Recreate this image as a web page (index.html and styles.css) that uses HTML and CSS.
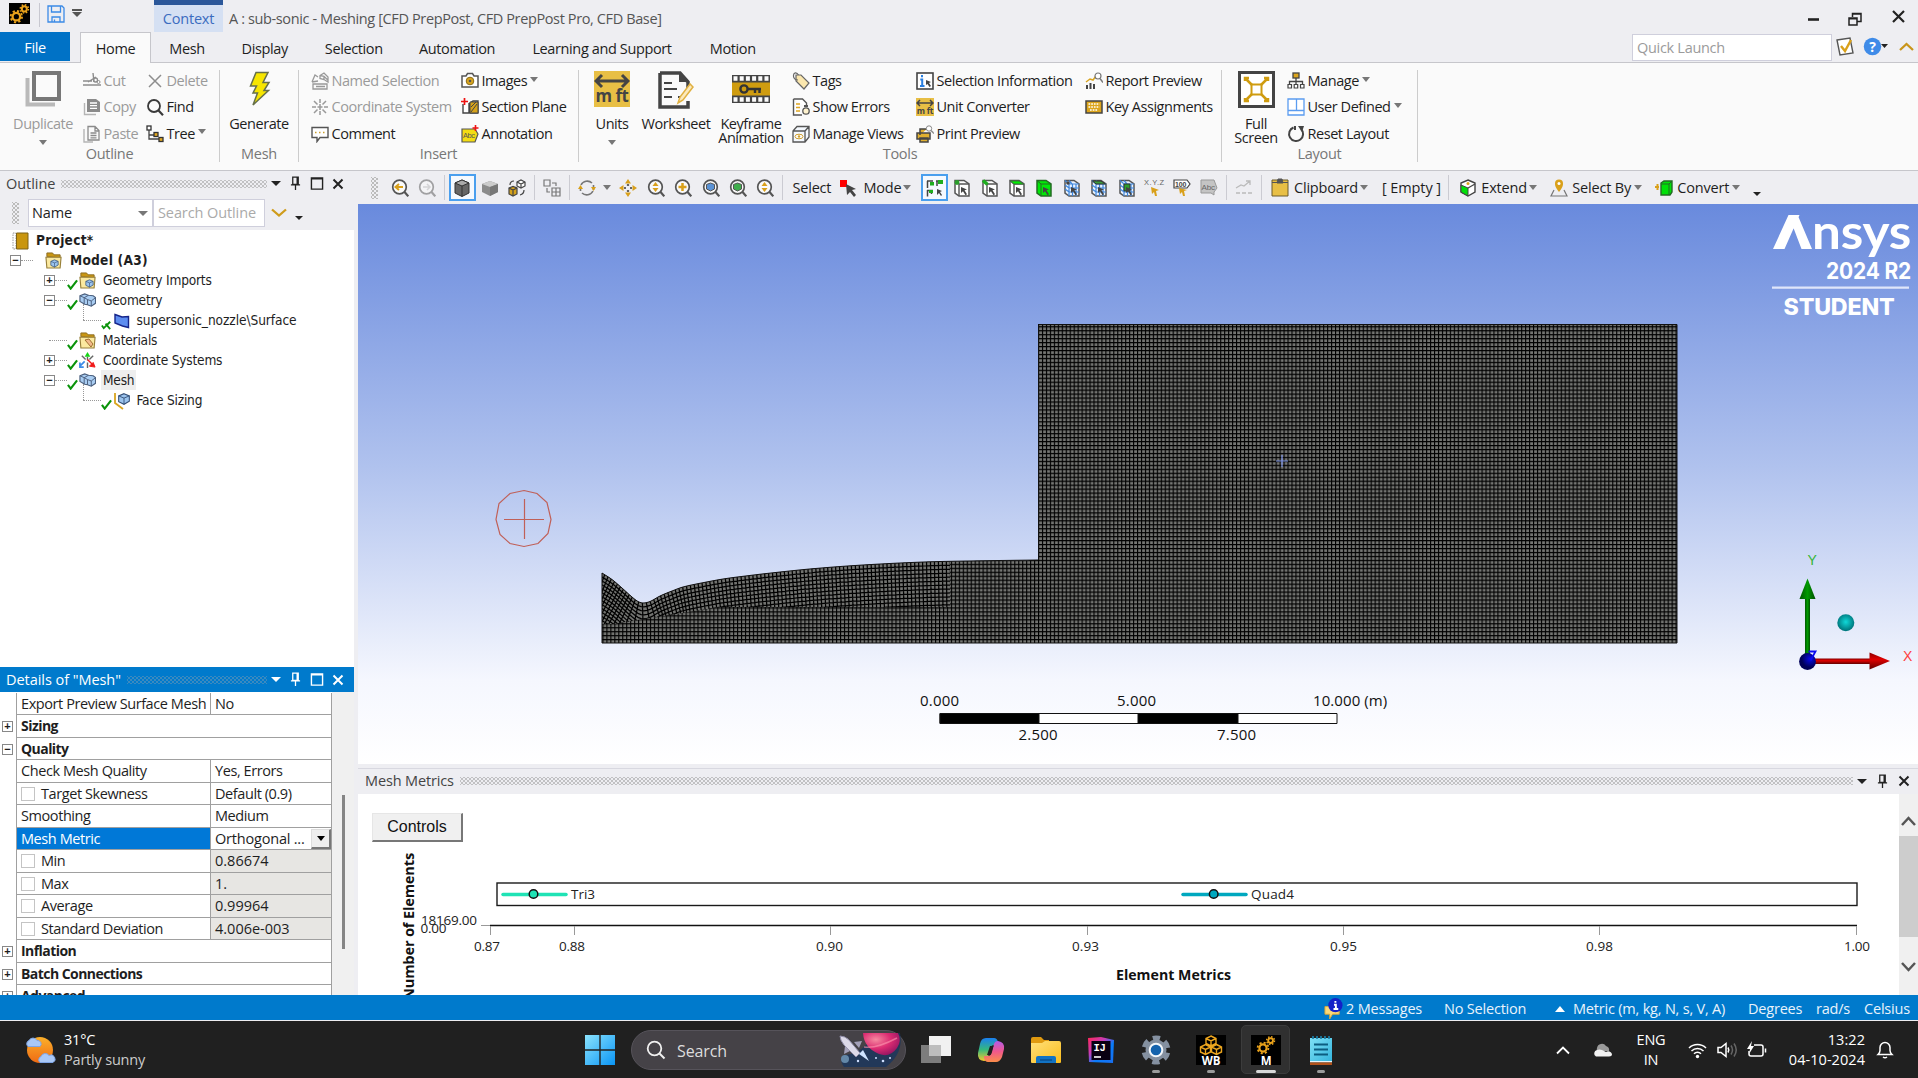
FILE: index.html
```html
<!DOCTYPE html>
<html lang="en">
<head>
<meta charset="utf-8">
<title>A : sub-sonic - Meshing</title>
<link rel="stylesheet" href="styles.css">
</head>
<body>
<svg class="defs" aria-hidden="true">
  <defs>
    <linearGradient id="gWin" x1="0" y1="0" x2="1" y2="1"><stop offset="0" stop-color="#8be3fd"/><stop offset="1" stop-color="#0a95f5"/></linearGradient>
    <linearGradient id="gSun" x1="0" y1="0" x2="0" y2="1"><stop offset="0" stop-color="#fbb02a"/><stop offset="1" stop-color="#ef6a13"/></linearGradient>
    <linearGradient id="gPad" x1="0" y1="0" x2="1" y2="1"><stop offset="0" stop-color="#7fe0f5"/><stop offset="1" stop-color="#33b4dd"/></linearGradient>
    <linearGradient id="gFold" x1="0" y1="0" x2="1" y2="1"><stop offset="0" stop-color="#ffe07a"/><stop offset="1" stop-color="#fbbd1d"/></linearGradient>
    <linearGradient id="gCopA" x1="0" y1="0" x2="0" y2="1"><stop offset="0" stop-color="#1a7ff0"/><stop offset=".5" stop-color="#35b87e"/><stop offset="1" stop-color="#f6c92c"/></linearGradient>
    <linearGradient id="gCopB" x1="0" y1="0" x2="0" y2="1"><stop offset="0" stop-color="#b25be8"/><stop offset=".5" stop-color="#f0588c"/><stop offset="1" stop-color="#fb8d4a"/></linearGradient>
    <linearGradient id="gIj" x1="0" y1="0" x2="1" y2="1"><stop offset="0" stop-color="#fe2857"/><stop offset=".35" stop-color="#c93bb5"/><stop offset=".6" stop-color="#087cfa"/><stop offset="1" stop-color="#1a6ff0"/></linearGradient>
    <radialGradient id="gPlanet" cx=".35" cy=".3" r=".8"><stop offset="0" stop-color="#f58aa0"/><stop offset=".5" stop-color="#dc2c72"/><stop offset="1" stop-color="#8a1260"/></radialGradient>
    <symbol id="gears" viewBox="0 0 20 20"><rect width="20" height="20" fill="#000"/><g fill="none" stroke="#e9a21b"><circle cx="7" cy="13" r="3.6" stroke-width="2.2"/><circle cx="7" cy="13" r="5.4" stroke-width="1.8" stroke-dasharray="2.1 2.14"/><circle cx="14.6" cy="5.6" r="2.4" stroke-width="1.9"/><circle cx="14.6" cy="5.6" r="3.9" stroke-width="1.5" stroke-dasharray="1.5 1.56"/></g></symbol>
    <symbol id="save" viewBox="0 0 18 18"><path d="M1 1h14l2 2v14H1zM4.5 1v6h9V1M5 17v-5h8v5M7.5 14.5v2.500" fill="none" stroke="#3b8ae6" stroke-width="1.300"/></symbol>
    <symbol id="dup" viewBox="0 0 36 36"><path d="M2.500 7v26.500H30" fill="none" stroke="#b9b9b9" stroke-width="4"/><rect x="9" y="2" width="25" height="26" fill="#fafafa" stroke="#777" stroke-width="4"/></symbol>
    <symbol id="cut" viewBox="0 0 18 18"><path d="M0 9h9M10 1l1 9M5 10l8-5M0 13h18" fill="none" stroke="#8d8d8d" stroke-width="1.400"/><circle cx="12.500" cy="8" r="2" fill="none" stroke="#8d8d8d" stroke-width="1.300"/><circle cx="15.500" cy="10" r="1.500" fill="none" stroke="#8d8d8d"/></symbol>
    <symbol id="copy" viewBox="0 0 18 18"><path d="M1.500 5v11.500H13" fill="none" stroke="#b5b5b5" stroke-width="1.400"/><path d="M4 1h9l4 3v10H4z" fill="#8b8b8b"/><path d="M7 5h7M7 7.700h7M7 10.400h7" stroke="#fff" stroke-width="1.300"/></symbol>
    <symbol id="paste" viewBox="0 0 18 18"><path d="M1 4v13h9" fill="none" stroke="#b5b5b5" stroke-width="1.400"/><path d="M5 1.500h7l4 4V15H5zM12 1.500V6h4M7.500 8h6M7.500 10.500h6M7.500 12.800h6" fill="none" stroke="#8b8b8b" stroke-width="1.300"/></symbol>
    <symbol id="del" viewBox="0 0 18 18"><path d="M3 3l12 12M15 3L3 15" stroke="#8d8d8d" stroke-width="1.500"/></symbol>
    <symbol id="find" viewBox="0 0 18 18"><circle cx="8" cy="8" r="6" fill="none" stroke="#3a3a3a" stroke-width="1.800"/><path d="M12.300 12.300l4.700 4.900" stroke="#3a3a3a" stroke-width="2.200"/></symbol>
    <symbol id="tree" viewBox="0 0 18 18"><path d="M3 5v9h10M3 10h6" fill="none" stroke="#444" stroke-width="1.300"/><rect x="1" y="1" width="4" height="4" fill="#fff" stroke="#333" stroke-width="1.300"/><rect x="8" y="7.500" width="4" height="4" fill="#e0a620" stroke="#333" stroke-width="1.300"/><rect x="13" y="12.500" width="4" height="4" fill="#e0a620" stroke="#333" stroke-width="1.300"/></symbol>
    <symbol id="bolt" viewBox="0 0 24 36"><path d="M9 1.500h12l-5 10h6l-5 8h4.500L6 34l4.500-12H6l3.500-7H3.500z" fill="#f7e600" stroke="#66704a" stroke-width="1.500"/></symbol>
    <symbol id="named" viewBox="0 0 18 18"><path d="M2 12h14v5H2zM5 14.500h9M9 3.500L13 1l4 4v5l-4-2.500-4-1zM9 3.500l4 .8 4 4M13 4.300V8M1 10L4 3l3 2M1 10l6-1" fill="none" stroke="#999" stroke-width="1.300"/></symbol>
    <symbol id="coord" viewBox="0 0 18 18"><path d="M9 1v4M9 17v-4M3 3l3.500 3.500M15 3l-3.500 3.500M3 15l3.500-3.500M15 15l-3.500-3.500M1 9h4M17 9h-4M9 6v6M6.500 9h5" stroke="#999" stroke-width="1.500"/></symbol>
    <symbol id="comment" viewBox="0 0 18 18"><path d="M1 2.500h16v10H9l-3 4v-4H1z" fill="#fff" stroke="#555" stroke-width="1.400"/><path d="M4 7.500h1.500M8 7.500h1.500M12 7.500h1.500" stroke="#caa030" stroke-width="1.500"/></symbol>
    <symbol id="camera" viewBox="0 0 18 18"><path d="M1 4h4l1.500-2.500h5L13 4h4v11H1z" fill="#fff" stroke="#555" stroke-width="1.500"/><circle cx="9" cy="9" r="3.800" fill="#d9a51d" stroke="#8a6a15"/><circle cx="9" cy="9" r="1.300" fill="#555"/></symbol>
    <symbol id="section" viewBox="0 0 18 18"><path d="M2 6v9h6V5M9 15V5l3-2h5v12z" fill="#fff" stroke="#444" stroke-width="1.400"/><path d="M9 4h8v11H9z" fill="#d6a21a" stroke="#444"/><path d="M10 14l6-8M10 9l5-5" stroke="#444"/><path d="M3.500 0v7M0 3.500h7" stroke="#e11" stroke-width="1.700"/></symbol>
    <symbol id="annot" viewBox="0 0 18 18"><path d="M1 4h13l3 5-3 8H1z" fill="#f3dc12" stroke="#555" stroke-width="1.200"/><text x="2" y="12.500" font-family="Liberation Sans" font-size="7.500" fill="#555">Abc</text><path d="M14.500 0v6M11.500 3h6" stroke="#e11" stroke-width="1.600"/></symbol>
    <symbol id="units" viewBox="0 0 36 36"><rect width="36" height="36" fill="#e8bf45"/><path d="M2 10h32M8 4L2 10l6 6M28 4l6 6-6 6" fill="none" stroke="#444" stroke-width="3"/><text x="1.500" y="31" font-family="Open Sans,sans-serif" font-weight="700" font-size="17" textLength="33" lengthAdjust="spacingAndGlyphs" fill="#444">m ft</text></symbol>
    <symbol id="sheet" viewBox="0 0 36 38"><path d="M2 2h20l8 9v8M30 30v6H2V2" fill="none" stroke="#444" stroke-width="3.500"/><path d="M21 2v9h9z" fill="#444"/><path d="M6 12h8M6 18h13M6 26h8M20 26h4" stroke="#444" stroke-width="2.200"/><path d="M20 32l2-6 10-13 3 3-10 13z" fill="#fbe9bd" stroke="#e0b040" stroke-width="1.500"/></symbol>
    <symbol id="film" viewBox="0 0 38 28"><path d="M0 0h38v28H0z" fill="#444"/><path d="M1.500 3.500h35M1.500 24.500h35" stroke="#fafafa" stroke-width="4.500" stroke-dasharray="4 2.200"/><path d="M0 7.500h38v13H0z" fill="#cf9c10"/><circle cx="12" cy="14" r="3.600" fill="none" stroke="#333" stroke-width="2.400"/><path d="M15 14h14M23 14v4M27.500 14v4" stroke="#333" stroke-width="2.400"/></symbol>
    <symbol id="tag" viewBox="0 0 18 18"><path d="M4 3h5l8 8-5 6-8-8z" fill="#fbe7ae" stroke="#666" stroke-width="1.200"/><path d="M6 8C3 8 1 6 1.500 3S5 .5 6.500 3" fill="none" stroke="#666" stroke-width="1.200"/></symbol>
    <symbol id="errors" viewBox="0 0 18 18"><path d="M1.500 1h9l4 4v4M10 17H1.500V1" fill="#fff" stroke="#555" stroke-width="1.400"/><path d="M4 6h4M4 9.500h4M4 13h4" stroke="#e0a620" stroke-width="1.500"/><path d="M12 7h4v2h-4z" fill="#555"/><circle cx="14" cy="13" r="3.200" fill="#fff3cf" stroke="#555" stroke-width="1.300"/></symbol>
    <symbol id="views" viewBox="0 0 18 18"><path d="M1 6l4-4.500h12V12l-4 5H1zM1 6h12v11M13 6l4-4.500" fill="#f4f8fd" stroke="#555" stroke-width="1.300"/><ellipse cx="7" cy="11.500" rx="4" ry="2.300" fill="#fff" stroke="#d0a030"/><circle cx="7" cy="11.500" r="1.200" fill="#d0a030"/></symbol>
    <symbol id="selinfo" viewBox="0 0 18 18"><rect x="1" y="1" width="16" height="16" fill="#fff" stroke="#444" stroke-width="1.600"/><path d="M6 3v2.200M4.300 7.500H6.200V14M4 14h4.500" stroke="#2a7fe0" stroke-width="2" fill="none"/><path d="M10 8l5 2-2 1 2 3-1.500 1-2-3L10 13z" fill="#444"/></symbol>
    <symbol id="print" viewBox="0 0 18 18"><path d="M4 10V4h7M1 8h13v6H1zM4 13h8v4H4z" fill="#e0b030" stroke="#444" stroke-width="1.500"/><circle cx="13" cy="3.500" r="2.700" fill="#fff" stroke="#888"/><path d="M15 5.500l3 3" stroke="#888" stroke-width="1.400"/></symbol>
    <symbol id="report" viewBox="0 0 18 18"><path d="M1 10l4-3 3 1 3-4" fill="none" stroke="#d9a520" stroke-width="1.500"/><path d="M2 17v-4M5.500 17v-6M9 17v-5" stroke="#444" stroke-width="2"/><circle cx="13" cy="4" r="3" fill="#fff" stroke="#777" stroke-width="1.200"/><path d="M15 6.500l3 4" stroke="#777" stroke-width="1.400"/></symbol>
    <symbol id="keyb" viewBox="0 0 18 18"><rect x="1" y="3" width="16" height="12" fill="#dca51c" stroke="#444" stroke-width="1.500"/><path d="M3.500 6h11M3.500 9h11M5 12h8" stroke="#fff" stroke-width="1.700" stroke-dasharray="1.700 1"/></symbol>
    <symbol id="full" viewBox="0 0 37 37"><rect x="1.500" y="1.500" width="34" height="34" fill="#fff" stroke="#444" stroke-width="3"/><rect x="13.500" y="13.500" width="10" height="10" fill="none" stroke="#cf9c10" stroke-width="2"/><path d="M7 7l7 7M30 7l-7 7M7 30l7-7M30 30l-7-7M7 10V7h4M26 7h4v3M7 27v3h4M26 30h4v-3" fill="none" stroke="#cf9c10" stroke-width="2.500"/></symbol>
    <symbol id="manage" viewBox="0 0 18 18"><rect x="6" y="1" width="6" height="5" fill="#dca51c" stroke="#444" stroke-width="1.300"/><path d="M9 6v6M2.500 12V9.500h13V12" fill="none" stroke="#444" stroke-width="1.300"/><path d="M1 12.500h3.500v3.500H1zM7.200 12.500h3.500v3.500H7.200zM13.500 12.500h3.500v3.500h-3.500z" fill="#fff" stroke="#444" stroke-width="1.200"/></symbol>
    <symbol id="userdef" viewBox="0 0 18 18"><path d="M1 1h16v16H1zM1 12.500h16M9.500 1v11.500" fill="#fff" stroke="#5b9cf0" stroke-width="1.300"/></symbol>
    <symbol id="reset" viewBox="0 0 18 18"><path d="M6.500 2.500a7 7 0 1 0 7.500 1.500M8 1v4" fill="none" stroke="#444" stroke-width="2"/><path d="M11 1h6l-2 6z" fill="#444"/></symbol>
    <symbol id="mag" viewBox="0 0 18 18"><circle cx="8.500" cy="8" r="6.800" fill="#fafafa" stroke="#555" stroke-width="1.700"/><path d="M13.300 12.800l4 4.500" stroke="#555" stroke-width="2.200"/></symbol>
    <symbol id="box" viewBox="0 0 18 18"><path d="M2 1.500h9L16 5v12H6L2 14z" fill="#fff" stroke="#555" stroke-width="1.500"/><path d="M2 1.500L6 5h10M6 5v12" fill="none" stroke="#555" stroke-width="1.400"/></symbol>
    <symbol id="ptr" viewBox="0 0 18 18"><path d="M8 8l6 2.500-2.500.8 2.500 4-1.500 1-2.500-4L8 14z" fill="#444"/></symbol>
    <symbol id="grid" viewBox="0 0 18 18"><path d="M2 1.500h9L16 5v12H6L2 14z" fill="#e8f1fd" stroke="#555" stroke-width="1.500"/><path d="M6 5v12M2 1.500L6 5h10M9.500 5v12M13 5v12M2 6l4 3h10M2 10l4 3h10M6 1.500l3 3.500" fill="none" stroke="#3d86dd" stroke-width="1.200"/></symbol>
    <symbol id="pin" viewBox="0 0 12 16"><path d="M3 1h6v8H3zM1 9.500h10M6 9.500V15M7.800 1v8" fill="none" stroke="currentColor" stroke-width="1.400"/></symbol>
    <symbol id="max" viewBox="0 0 14 14"><path d="M1 1h12v12H1zM1 2h12" fill="none" stroke="currentColor" stroke-width="1.500"/></symbol>
    <symbol id="close" viewBox="0 0 12 12"><path d="M1.500 1.500l9 9M10.500 1.500l-9 9" stroke="currentColor" stroke-width="2"/></symbol>
    <symbol id="check" viewBox="0 0 12 12"><path d="M1 6.500l3 4L11 1.500" fill="none" stroke="#0a930a" stroke-width="2.300"/></symbol>
    <symbol id="folder" viewBox="0 0 18 18"><path d="M2 5V1h6l1.500 2H16v3z" fill="#c99613" stroke="#8a6a20"/><path d="M1 5.500h16L16 17H2z" fill="#fbe9a0" stroke="#98803a" stroke-width="1.200"/></symbol>
    <symbol id="cube" viewBox="0 0 18 18"><path d="M9 3l6 2.500v6L9 15 3 12V5.500z" fill="#9cc4ee" stroke="#334f77" stroke-width="1.200"/><path d="M3 5.500L9 8l6-2.500M9 8v7" fill="none" stroke="#334f77"/></symbol>
    <symbol id="cubes" viewBox="0 0 18 18"><path d="M1 4l5-2 4 1.500L15 4l2.500 2v6L13 15l-4-1.500L6 13l-5-3z" fill="#a9cdf2" stroke="#4a5f7d" stroke-width="1.200"/><path d="M1 4l4.500 2L10 3.500M5.500 6v6.500M9 8l4 1.500L17.500 6M9 8v5.500M13 9.500V15M9 8l-3.500-2" fill="none" stroke="#4a5f7d"/></symbol>
    <symbol id="info" viewBox="0 0 20 24"><path d="M1 10h15v8H9l-3 5v-5H1z" fill="#fbd978" stroke="#d8a838"/><circle cx="12" cy="8.500" r="7.500" fill="#1421c8"/><path d="M12 4v2M10.500 8H12.500v4.500M10 12.500h5" stroke="#fff" stroke-width="2" fill="none"/></symbol>
  </defs>
</svg>

<header class="titlebar">
  <svg class="app-ic"><use href="#gears"/></svg><i class="tsep"></i>
  <svg class="save-ic"><use href="#save"/></svg><span class="qat"></span>
  <div class="context">Context</div>
  <div class="wintitle">A : sub-sonic - Meshing [CFD PrepPost, CFD PrepPost Pro, CFD Base]</div>
  <svg class="winbtns" viewBox="0 0 100 20"><path d="M2 10.500h11" stroke="#222" stroke-width="2.600"/><path d="M43 9h8v7h-8zM46.500 8V4.500h8.500v8h-3.500M46 5h9M43 9.700h8" fill="none" stroke="#222" stroke-width="1.500"/><path d="M87 2l11 11M98 2L87 13" stroke="#222" stroke-width="2.200"/></svg>
</header>

<nav class="tabs">
  <div class="tab file">File</div>
  <div class="tab home">Home</div><div class="tab w1">Mesh</div><div class="tab w2">Display</div><div class="tab w3">Selection</div><div class="tab w4">Automation</div><div class="tab w5">Learning and Support</div><div class="tab w2">Motion</div>
  <div class="quick">Quick Launch</div>
  <svg class="quick-ic" viewBox="0 0 80 20"><path d="M1 3l13-2 3 15-13 2z" fill="#fff" stroke="#555" stroke-width="1.400"/><path d="M5 9l4 5 6-11" fill="none" stroke="#d9a01a" stroke-width="2.400"/><circle cx="36.500" cy="9.500" r="8.700" fill="#3f8be8"/><text x="36.500" y="15" text-anchor="middle" font-family="Open Sans,sans-serif" font-weight="700" font-size="14" fill="#fff">?</text><path d="M45 7h7l-3.500 4z" fill="#222"/><path d="M64 13l6.500-6 6.500 6" fill="none" stroke="#c9951a" stroke-width="2.300"/></svg>
</nav>

<section class="ribbon">
  <div class="group g-outline">
    <div class="items">
      <div class="big off"><svg width="36" height="36"><use href="#dup"/></svg><b>Duplicate</b><i class="dd"></i></div>
      <div class="col"><div class="it off"><svg><use href="#cut"/></svg>Cut</div><div class="it off"><svg><use href="#copy"/></svg>Copy</div><div class="it off"><svg><use href="#paste"/></svg>Paste</div></div>
      <div class="col"><div class="it off"><svg><use href="#del"/></svg>Delete</div><div class="it"><svg><use href="#find"/></svg>Find</div><div class="it"><svg><use href="#tree"/></svg>Tree<i class="dd"></i></div></div>
    </div><div class="glabel">Outline</div>
  </div>
  <div class="group g-mesh">
    <div class="items"><div class="big"><svg width="24" height="36"><use href="#bolt"/></svg><b>Generate</b></div></div><div class="glabel">Mesh</div>
  </div>
  <div class="group g-insert">
    <div class="items">
      <div class="col"><div class="it off"><svg><use href="#named"/></svg>Named Selection</div><div class="it off"><svg><use href="#coord"/></svg>Coordinate System</div><div class="it"><svg><use href="#comment"/></svg>Comment</div></div>
      <div class="col"><div class="it"><svg><use href="#camera"/></svg>Images<i class="dd"></i></div><div class="it"><svg><use href="#section"/></svg>Section Plane</div><div class="it"><svg><use href="#annot"/></svg>Annotation</div></div>
    </div><div class="glabel">Insert</div>
  </div>
  <div class="group g-tools">
    <div class="items">
      <div class="big"><svg width="36" height="36"><use href="#units"/></svg><b>Units</b><i class="dd"></i></div>
      <div class="big"><svg width="36" height="38"><use href="#sheet"/></svg><b>Worksheet</b></div>
      <div class="big"><svg width="38" height="36"><use href="#film"/></svg><b>Keyframe<br>Animation</b></div>
      <div class="col"><div class="it"><svg><use href="#tag"/></svg>Tags</div><div class="it"><svg><use href="#errors"/></svg>Show Errors</div><div class="it"><svg><use href="#views"/></svg>Manage Views</div></div>
      <div class="col"><div class="it"><svg><use href="#selinfo"/></svg>Selection Information</div><div class="it"><svg><use href="#units"/></svg>Unit Converter</div><div class="it"><svg><use href="#print"/></svg>Print Preview</div></div>
      <div class="col"><div class="it"><svg><use href="#report"/></svg>Report Preview</div><div class="it"><svg><use href="#keyb"/></svg>Key Assignments</div></div>
    </div><div class="glabel">Tools</div>
  </div>
  <div class="group g-layout">
    <div class="items">
      <div class="big"><svg width="37" height="37"><use href="#full"/></svg><b>Full<br>Screen</b></div>
      <div class="col"><div class="it"><svg><use href="#manage"/></svg>Manage<i class="dd"></i></div><div class="it"><svg><use href="#userdef"/></svg>User Defined<i class="dd"></i></div><div class="it"><svg><use href="#reset"/></svg>Reset Layout</div></div>
    </div><div class="glabel">Layout</div>
  </div>
</section>

<main class="work">
  <aside class="left">
    <div class="phead"><span>Outline</span><i class="dots"></i><i class="tri"></i><svg class="p1"><use href="#pin"/></svg><svg class="p2"><use href="#max"/></svg><svg class="p3"><use href="#close"/></svg></div>
    <div class="filter"><i class="grip"></i><div class="combo">Name<i class="dd"></i></div><div class="srch">Search Outline</div><svg class="chev" viewBox="0 0 16 10"><path d="M1 1.500l7 6 7-6" fill="none" stroke="#cf9c1c" stroke-width="2.300"/></svg><i class="tri sm"></i></div>
    <div class="treebox">
      <div class="row l0"><svg class="ti"><path d="M1 1h3v16H1z" fill="#fff" stroke="#999" stroke-dasharray="1.500 1"/><path d="M4.500 1H16v16H4.500z" fill="#c9960f" stroke="#7d6218"/></svg><b>Project*</b></div>
      <div class="row l1"><i class="ex">−</i><i class="dash"></i><svg class="ti"><use href="#folder"/><use href="#cube" x="4" y="6" width="11" height="11"/></svg><b>Model (A3)</b></div>
      <div class="row l2"><i class="ex">+</i><i class="dash"></i><svg class="ck"><use href="#check"/></svg><svg class="ti"><use href="#folder"/><use href="#cube" x="5" y="6" width="11" height="11"/></svg><span>Geometry Imports</span></div>
      <div class="row l2"><i class="ex">−</i><i class="dash"></i><svg class="ck"><use href="#check"/></svg><svg class="ti"><use href="#cubes"/></svg><span>Geometry</span></div>
      <div class="row l3"><i class="dash"></i><svg class="ck" viewBox="0 0 12 12"><path d="M1 7l2 3 7-7M5 5l5 6" fill="none" stroke="#0a930a" stroke-width="2"/></svg><svg class="ti"><path d="M2 2.500l7 2.500 6.500-.5v11l-6-1.500-7.500-3z" fill="#5d8df0" stroke="#15248a" stroke-width="1.400"/></svg><span class="wide">supersonic_nozzle\Surface</span></div>
      <div class="row l2 noex"><i class="dash"></i><svg class="ck"><use href="#check"/></svg><svg class="ti"><use href="#folder"/><path d="M6 8l4-1 4 5-2 3z" fill="#f2b98c" stroke="#a07030"/></svg><span>Materials</span></div>
      <div class="row l2"><i class="ex">+</i><i class="dash"></i><svg class="ck"><use href="#check"/></svg><svg class="ti" viewBox="0 0 18 18"><path d="M9 9V5M3 4l4 4M15 4l-4 4M9 11v6" stroke="#666" stroke-width="1.500"/><path d="M9 0L6 5h6z" fill="#16d416"/><path d="M17 16l-6-1 4-4z" fill="#f01818" stroke="#f01818"/><path d="M1 15l5-5M1 11v5h4" stroke="#3b8be8" stroke-width="1.800" fill="none"/><path d="M9 8l5 5" stroke="#f01818" stroke-width="1.500"/></svg><span>Coordinate Systems</span></div>
      <div class="row l2"><i class="ex">−</i><i class="dash"></i><svg class="ck"><use href="#check"/></svg><svg class="ti"><use href="#cubes"/></svg><span class="hl">Mesh</span></div>
      <div class="row l3"><i class="dash"></i><svg class="ck"><use href="#check"/></svg><svg class="ti"><path d="M2 1v10l8 6" fill="none" stroke="#d9a520" stroke-width="1.800"/><use href="#cube" x="3" y="-1" width="16" height="16"/></svg><span>Face Sizing</span></div>
    </div>
    <div class="phead blue"><span>Details of "Mesh"</span><i class="dots"></i><i class="tri"></i><svg class="p1"><use href="#pin"/></svg><svg class="p2"><use href="#max"/></svg><svg class="p3"><use href="#close"/></svg></div>
    <div class="details">
      <div class="table">
        <div class="dr"><i></i><span>Export Preview Surface Mesh</span><em>No</em></div>
        <div class="dr hd"><i><s>+</s></i><b>Sizing</b></div>
        <div class="dr hd"><i><s>−</s></i><b>Quality</b></div>
        <div class="dr"><i></i><span>Check Mesh Quality</span><em>Yes, Errors</em></div>
        <div class="dr"><i></i><span><u></u>Target Skewness</span><em>Default (0.9)</em></div>
        <div class="dr"><i></i><span>Smoothing</span><em>Medium</em></div>
        <div class="dr sel"><i></i><span>Mesh Metric</span><em>Orthogonal ...<q></q></em></div>
        <div class="dr ro"><i></i><span><u></u>Min</span><em>0.86674</em></div>
        <div class="dr ro"><i></i><span><u></u>Max</span><em>1.</em></div>
        <div class="dr ro"><i></i><span><u></u>Average</span><em>0.99964</em></div>
        <div class="dr ro"><i></i><span><u></u>Standard Deviation</span><em>4.006e-003</em></div>
        <div class="dr hd"><i><s>+</s></i><b>Inflation</b></div>
        <div class="dr hd"><i><s>+</s></i><b>Batch Connections</b></div>
        <div class="dr hd"><i><s>+</s></i><b>Advanced</b></div>
      </div>
      <div class="dscroll"></div>
    </div>
  </aside>

  <section class="right">
    <div class="toolbar">
      <i class="grip"></i>
      <span class="c"><svg><use href="#mag"/><path d="M4 8h8M8 5L4.500 8 8 11" stroke="#d9a01a" stroke-width="2" fill="none"/></svg></span>
      <span class="c"><svg opacity=".5"><use href="#mag"/><path d="M5 8h7M9 5l3 3-3 3" stroke="#bbb" stroke-width="1.500" fill="none"/></svg></span>
      <i class="sep"></i>
      <span class="c on"><svg><path d="M9 1l7 3v10l-7 3.500L2 14V4z" fill="#666" stroke="#333"/><path d="M2 4l7 3 7-3-7-3z" fill="#aaa" stroke="#333"/><path d="M9 7v10.500" stroke="#333"/></svg></span>
      <span class="c"><svg><path d="M9 2l8 3v8l-8 4-8-4V5z" fill="#8b8b8b"/><path d="M1 5l8 3 8-3-8-3z" fill="#ccc"/><path d="M9 8l8-3v8l-8 4z" fill="#777"/></svg></span>
      <span class="c"><svg><path d="M9 3l4-2 4 2v4l-4 2-4-2z" fill="#fff" stroke="#444" stroke-width="1.200"/><path d="M1 9l4-1.500L9 9v6l-4 2-4-2z" fill="#d6a21a" stroke="#444" stroke-width="1.200"/><path d="M1 9l4 2 4-2M5 11v6M9 3l4 2 4-2M13 5v4M2 6q0-4 4-4M16 11q0 4-4 5" fill="none" stroke="#444" stroke-width="1.200"/></svg></span>
      <i class="sep"></i>
      <span class="c"><svg><path d="M1 1h6v6H1zM9 9h8v8H9zM13 9v8M9 13h8M9 4h4v3M4 9v4h3" fill="none" stroke="#777" stroke-width="1.200"/></svg></span>
      <i class="sep"></i>
      <span class="c"><svg><path d="M3 6a7 7 0 0 1 11-2M15 12a7 7 0 0 1-11 2M2.500 12V8M15.500 6v5" fill="none" stroke="#777" stroke-width="1.600"/><path d="M0 10h5l-2.500-4zM13 8h5l-2.500 4z" fill="#d9a01a"/></svg></span>
      <span class="c arrow"><i class="dd"></i></span>
      <span class="c"><svg><path d="M9 0l3 4.500H6zM9 18l3-4.500H6zM0 9l4.500-3v6zM18 9l-4.500-3v6z" fill="#d9a01a"/><path d="M9 5v2M9 11v2M5 9h2M11 9h2" stroke="#666" stroke-width="2.200"/></svg></span>
      <span class="c"><svg><use href="#mag"/><path d="M8.500 3l3 4h-6zM8.500 13l3-4h-6z" fill="#d9a01a"/></svg></span>
      <span class="c"><svg><use href="#mag"/><path d="M8.500 4v8M4.500 8h8" stroke="#d9a01a" stroke-width="2.500"/></svg></span>
      <span class="c"><svg><use href="#mag"/><path d="M8.500 4l4 1.500V10l-4 2-4-2V5.500z" fill="#5b93d6" stroke="#555"/></svg></span>
      <span class="c"><svg><use href="#mag"/><path d="M8.500 4l4 1.500V10l-4 2-4-2V5.500z" fill="#3fae4b" stroke="#555"/></svg></span>
      <span class="c"><svg><use href="#mag"/><path d="M8.500 3l3 4h-6zM8.500 13l3-4h-6z" fill="#d9a01a"/></svg></span>
      <i class="sep"></i>
      <span class="t t-sel">Select</span>
      <span class="t t-mode"><svg><path d="M0 1h7v7H0z" fill="#f00"/><path d="M6 5l10 5-4 1 4 5-2 2-4-5-3 3z" fill="#444"/></svg>Mode<i class="dd"></i></span>
      <span class="c on"><svg><path d="M1.500 9V2M1 2h6M10 2h7M11 2v5M1 11.500h6M1.500 11v6.500M5.500 11.500V15" stroke="#444" stroke-width="1.500" fill="none"/><path d="M4 3h4v3.500H4zM12 1h5v4h-5zM3 11h4v3H3z" fill="#1fae1f"/><path d="M11 10l5 2-2 1 2 3-1 1-2-3-2 2z" fill="#444"/></svg></span>
      <span class="c"><svg><use href="#box"/><circle cx="4" cy="3.500" r="2.400" fill="#2c9e2c"/><use href="#ptr"/></svg></span>
      <span class="c"><svg><use href="#box"/><path d="M2 1.500L6.500 5.500" stroke="#1fae1f" stroke-width="3.500"/><use href="#ptr"/></svg></span>
      <span class="c"><svg><use href="#box"/><path d="M2.500 2h8.500L15.500 5H6z" fill="#00f000" stroke="#357a35"/><use href="#ptr"/></svg></span>
      <span class="c"><svg><path d="M2 1.500h9L16 5v12H6L2 14z" fill="#00e808" stroke="#246b24" stroke-width="1.500"/><path d="M2 1.500L6 5h10M6 5v12" fill="none" stroke="#246b24"/><use href="#ptr"/></svg></span>
      <span class="c"><svg><use href="#grid"/><circle cx="5" cy="4" r="1.800" fill="#444"/><use href="#ptr"/></svg></span>
      <span class="c"><svg><use href="#grid"/><path d="M2.500 2h8.500L15.500 5H6z" fill="#3c9e3c" stroke="#333"/><use href="#ptr"/></svg></span>
      <span class="c"><svg><use href="#grid"/><path d="M6 5h6v7H6z" fill="#2c9e2c" stroke="#333"/><use href="#ptr"/></svg></span>
      <span class="c"><svg><text x="-1" y="6" font-family="Liberation Sans" font-size="7.500" textLength="20" fill="#666">X.Y.Z</text><path d="M6 8l8 3-3 1 1 5h-2l-1-4-2 2z" fill="#d9a01a"/></svg></span>
      <span class="c"><svg><path d="M1 1h13l3 4-3 4H1z" fill="#fff" stroke="#444" stroke-width="1.200"/><text x="2" y="7.500" font-family="Liberation Sans" font-size="7" font-weight="700" fill="#444">100</text><path d="M6 9l8 2-3 1 1 5h-2l-1-4-2 2z" fill="#d9a01a"/></svg></span>
      <span class="c"><svg><path d="M1 1h13l3 8-3 4v3l-3-2H1z" fill="#c4c4c4" stroke="#999"/><text x="1.500" y="11" font-family="Liberation Sans" font-size="8" fill="#666">Abc</text></svg></span>
      <i class="sep"></i>
      <span class="c"><svg><path d="M1 9l5-3 3 1 6-5M11 2h4v4M1 14h4M7 14h4M13 14h4" fill="none" stroke="#bbb" stroke-width="1.300"/></svg></span>
      <i class="sep"></i>
      <span class="t t-clip"><svg><path d="M1 1h16v16H1z" fill="#e8bf45" stroke="#6a5a2a"/><path d="M1 3.500h16M7 0h4l1 4H6z" fill="#555" stroke="#555"/></svg>Clipboard<i class="dd"></i></span>
      <span class="t t-empty">[ Empty ]</span>
      <i class="sep"></i>
      <span class="t t-ext"><svg><path d="M9 1l7 3v9l-7 4-7-4V4z" fill="#fff" stroke="#444" stroke-width="1.400"/><path d="M2 6l7 3v8l-7-4z" fill="#00e008" stroke="#444"/><path d="M9 9l7-4" stroke="#444" stroke-width="1.300"/><circle cx="9" cy="4.500" r="1.500" fill="#d9a01a"/></svg>Extend<i class="dd"></i></span>
      <span class="t t-by"><svg><path d="M9 13C5 8 5 6 5 4.500a4 4 0 0 1 8 0C13 6 13 8 9 13z" fill="#d9a01a"/><circle cx="9" cy="4.500" r="1.500" fill="#fff"/><path d="M4 11l-3 6h16l-3-6" fill="none" stroke="#777" stroke-width="1.200"/></svg>Select By<i class="dd"></i></span>
      <span class="t t-conv"><svg><path d="M6 4l3-2h8v11l-2 3H6z" fill="#00e008" stroke="#246b24" stroke-width="1.400"/><path d="M6 5h8v11M14 5l3-3" fill="none" stroke="#246b24"/><path d="M0 8h4M2.500 5v6" stroke="#d9a01a" stroke-width="2"/></svg>Convert<i class="dd"></i></span>
      <i class="tri sm"></i>
    </div>

    <div class="view">
      <svg id="scene" width="1560" height="560" viewBox="358 204 1560 560">
        <defs>
          <radialGradient id="sB" cx=".65" cy=".35"><stop offset="0" stop-color="#0808e8"/><stop offset="1" stop-color="#000058"/></radialGradient>
          <radialGradient id="sC" cx=".5" cy=".45"><stop offset="0" stop-color="#10d8d8"/><stop offset="1" stop-color="#007a80"/></radialGradient>
          <linearGradient id="sG" x1="0" x2="1" y1="0" y2="0"><stop offset="0" stop-color="#005800"/><stop offset=".5" stop-color="#009a00"/><stop offset="1" stop-color="#005000"/></linearGradient>
          <linearGradient id="sR" x1="0" x2="0" y1="0" y2="1"><stop offset="0" stop-color="#8a0000"/><stop offset=".4" stop-color="#e00000"/><stop offset="1" stop-color="#600000"/></linearGradient>
          <pattern id="cells" width="3.960" height="3.960" patternUnits="userSpaceOnUse" x="1038" y="643"><rect width="3.960" height="3.960" fill="#757673"/><path d="M0 0H3.960M0 0V3.960" stroke="#000" stroke-width="2.300"/></pattern>
        </defs>
        <g id="mesh"></g>
        <path d="M1282 455v12M1276 461h12" stroke="#7f95e8" stroke-width="1.200"/>
        <g fill="none" stroke="#c06058" stroke-width="1.200"><path d="M524 490.500l13 3 10 9 4 17-3 14-10 10-14 3-14-3-10-9-4-15 3-16 11-10z"/><path d="M504 519.500h40M524.500 499v40"/></g>
        <g stroke="#111"><path d="M940 713.500h397v10h-397z" fill="#fff"/><path d="M940 713.500h99v10h-99zM1138 713.500h100v10h-100z" fill="#000"/></g>
        <g class="rule"><text x="939.500" y="706" textLength="39">0.000</text><text x="1136.500" y="706" textLength="39">5.000</text><text x="1350" y="706" textLength="74">10.000 (m)</text><text x="1038" y="740" textLength="39">2.500</text><text x="1236.500" y="740" textLength="39">7.500</text></g>
        <g fill="#fff">
          <path d="M1773 249l15.500-34h11L1784.500 249zM1798.500 217l13.500 32h-10.500l-8-21z"/>
          <text class="lg1" x="1812" y="249" textLength="99" lengthAdjust="spacingAndGlyphs">nsys</text>
          <text class="lg2" x="1826" y="279" textLength="85" lengthAdjust="spacingAndGlyphs">2024 R2</text>
          <path d="M1772 286.500h137v2.200h-137z" fill="#dfe6fa"/>
          <text class="lg3" x="1783.500" y="314.500" textLength="111" lengthAdjust="spacingAndGlyphs">STUDENT</text>
        </g>
        <path d="M1805 597h5v58h-5z" fill="url(#sG)"/><path d="M1807.500 578.500l8 20.500h-16z" fill="url(#sG)"/>
        <path d="M1812 658.500h58v5.500h-58z" fill="url(#sR)"/><path d="M1869.500 652.500l20.500 8.500-20.500 8.500z" fill="url(#sR)"/>
        <circle cx="1807.500" cy="661.500" r="8.400" fill="url(#sB)"/><path d="M1808.500 651.500h7l-5 9" fill="none" stroke="#0a0af0" stroke-width="1.800"/>
        <circle cx="1845.800" cy="622.800" r="8.500" fill="url(#sC)"/>
        <text class="ax" x="1812" y="565" fill="#35b535">Y</text><text class="ax" x="1907.500" y="661" fill="#ff4040">X</text>
      </svg>
    </div>

    <div class="metrics">
      <div class="phead mm"><span>Mesh Metrics</span><i class="dots"></i><i class="tri"></i><svg class="p1"><use href="#pin"/></svg><svg class="p3"><use href="#close"/></svg></div>
      <div class="mbody">
        <div class="chartcol">
          <button class="controls">Controls</button>
          <svg class="chart" width="1541" height="153" viewBox="358 842 1541 153">
            <text class="cb" transform="translate(414 1000) rotate(-90)" textLength="147" lengthAdjust="spacingAndGlyphs">Number of Elements</text>
            <rect x="497" y="883" width="1360" height="22.500" fill="#fff" stroke="#1a1a1a" stroke-width="1.400"/>
            <path d="M503 894.500h63" stroke="#1fe3b5" stroke-width="3.500" stroke-linecap="round"/><circle cx="533.500" cy="894" r="4.300" fill="#1fe3b5" stroke="#111" stroke-width="1.500"/>
            <path d="M1183 894.500h63" stroke="#00a8bf" stroke-width="3.500" stroke-linecap="round"/><circle cx="1213.700" cy="894" r="4.300" fill="#00a8bf" stroke="#111" stroke-width="1.500"/>
            <path d="M490 925.500H1857" stroke="#111" stroke-width="1.400"/>
            <path d="M481 925.500h9M490.500 926v9M574.500 926v9M830.500 926v9M1087.500 926v9M1343.500 926v9M1599.500 926v9M1856.500 926v9" stroke="#999"/>
            <g class="ct"><text x="571" y="899" textLength="24">Tri3</text><text x="1251" y="899" textLength="43">Quad4</text>
            <text x="421" y="925" textLength="56">18169.00</text><text x="420.500" y="932.500" textLength="26">0.00</text>
            <text x="474" y="951" textLength="26">0.87</text><text x="559" y="951" textLength="26">0.88</text><text x="816" y="951" textLength="27">0.90</text><text x="1072" y="951" textLength="27">0.93</text><text x="1330" y="951" textLength="27">0.95</text><text x="1586" y="951" textLength="27">0.98</text><text x="1844" y="951" textLength="26">1.00</text></g>
            <text class="ct bold" x="1116" y="979.500" textLength="115" lengthAdjust="spacingAndGlyphs">Element Metrics</text>
          </svg>
        </div>
        <div class="vscroll"><svg viewBox="0 0 19 12"><path d="M3 10l6.500-7 6.500 7" fill="none" stroke="#555" stroke-width="2.500"/></svg><i></i><svg viewBox="0 0 19 12"><path d="M3 2l6.500 7 6.500-7" fill="none" stroke="#555" stroke-width="2.500"/></svg></div>
      </div>
    </div>
  </section>
</main>

<footer class="status">
  <span class="s1"><svg><use href="#info"/></svg>2 Messages</span><span class="s2">No Selection</span><span class="s3"><i></i>Metric (m, kg, N, s, V, A)</span><span class="s4">Degrees</span><span class="s5">rad/s</span><span class="s6">Celsius</span>
</footer>

<div class="taskbar">
  <div class="weather"><svg width="32" height="30" viewBox="0 0 32 30"><circle cx="16" cy="15" r="13" fill="url(#gSun)"/><g fill="#a9c8f6" stroke="#7ea4e4"><path d="M4 11.500a3.500 3.500 0 0 1 1-6 4.500 4.500 0 0 1 8 0 3.500 3.500 0 0 1 3 6z"/><path d="M16 27.500a3.500 3.500 0 0 1 1-6 4.500 4.500 0 0 1 8-1 4 4 0 0 1 4 7z"/></g></svg><p>31°C<br><span>Partly sunny</span></p></div>
  <svg class="win" width="30" height="30" viewBox="0 0 30 30"><path d="M0 0h14.300v14.300H0zM15.700 0H30v14.300H15.700zM0 15.700h14.300V30H0zM15.700 15.700H30V30H15.700z" fill="url(#gWin)"/></svg>
  <div class="pill"><svg width="20" height="20" viewBox="0 0 20 20"><circle cx="8.500" cy="8.500" r="6.800" fill="none" stroke="#f0f0f0" stroke-width="1.800"/><path d="M13.500 13.500l5 5" stroke="#f0f0f0" stroke-width="2"/></svg><span>Search</span>
    <svg width="62" height="34" viewBox="0 0 62 34"><path d="M4 34q-6-8 2-12 12-2 20-10L34 0h26q4 20-14 34z" fill="#17355f" opacity=".75"/><path d="M23 0h35q4 8-1 15-7 10-18 6Q24 15 23 0z" fill="url(#gPlanet)"/><path d="M24 14q12 2 33-9" stroke="#ff9ab0" stroke-width="1.500" fill="none" opacity=".6"/><path d="M0 3q5 0 9 4l11 13-4 4L4 12q-4-5-4-9z" fill="#dcd9e8" stroke="#8f8ca8"/><path d="M5 13l-1 8 6-3zM14 9l8-1-3 7z" fill="#a3a0b8"/><path d="M19 21l10 7-6-11z" fill="#cfe4ff"/><circle cx="5" cy="26" r="4" fill="#6488a8"/><g fill="#cfe0ff"><circle cx="18" cy="28" r="1.200"/><circle cx="36" cy="25" r="1"/><circle cx="43" cy="28" r="1.300"/><circle cx="50" cy="25" r="1"/></g></svg></div>
  <div class="app"><svg viewBox="0 0 30 30"><path d="M0 10h20v18H0z" fill="#7d7d7d"/><path d="M8 1h22v20H8z" fill="#f1f1f1"/><path d="M8 10h12v11H8z" fill="#bdbdbd"/></svg></div>
  <div class="app"><svg viewBox="0 0 30 30"><path d="M10 3h8q3 0 4 4l1 3h-5q-3 0-4 4l-2 8q-1 4-4 4-7-1-6-8l2-9q1-6 6-6z" fill="url(#gCopA)"/><path d="M20 27h-8q-3 0-4-4v-2h4q3 0 4-4l2-8q1-3 4-3 7 1 6 8l-2 8q-2 5-6 5z" fill="url(#gCopB)"/><path d="M14 11h3.500l-3 9H11z" fill="#202020"/></svg></div>
  <div class="app"><svg viewBox="0 0 30 30"><path d="M0 4q0-2 2-2h8l3 3h5v6H0z" fill="#e09a10"/><path d="M0 8h11l3-2h14q2 0 2 2v19q0 1-1 1H1q-1 0-1-1z" fill="url(#gFold)"/><path d="M5 28v-5q0-2 2-2h16q2 0 2 2v5z" fill="#1273c4"/><path d="M9 25h12" stroke="#0a4f92" stroke-width="1.500"/></svg></div>
  <div class="app"><svg viewBox="0 0 30 30"><path d="M2 3l13-1 13 3-1 23-24-1z" fill="url(#gIj)"/><path d="M5.500 6h19v19h-19z" fill="#090012"/><text x="7.500" y="15.500" font-family="Liberation Mono,monospace" font-weight="700" font-size="10.500" fill="#fff">IJ</text><path d="M8 22h7" stroke="#fff" stroke-width="1.600"/></svg></div>
  <div class="app run"><svg viewBox="0 0 30 30"><circle cx="15" cy="15" r="10.500" fill="#8490a0"/><circle cx="15" cy="15" r="12" fill="none" stroke="#8490a0" stroke-width="5" stroke-dasharray="7.200 5.366" transform="rotate(13 15 15)"/><circle cx="15" cy="15" r="6.300" fill="#1463ad" stroke="#f2f6fa" stroke-width="2"/></svg></div>
  <div class="app run"><svg viewBox="0 0 30 30"><path d="M0 0h30v30H0z" fill="#000"/><path d="M15 1l5 2.500v5L15 11l-5-2.500v-5zM9.500 9.500l5 2.500v5l-5 2.500-5-2.500v-5zM20.500 9.500l5 2.500v5l-5 2.500-5-2.500v-5zM10 3.500L15 6l5-2.500M15 6v5M4.500 12l5 2.500 5-2.500M9.500 14.500v5M15.500 12l5 2.500 5-2.500M20.500 14.500v5" fill="none" stroke="#eda61e" stroke-width="1.400"/><text x="15" y="29.500" text-anchor="middle" font-family="Open Sans,sans-serif" font-weight="700" font-size="11.500" fill="#fff">WB</text></svg></div>
  <div class="app run act"><svg viewBox="0 0 30 30"><path d="M0 0h30v30H0z" fill="#000"/><use href="#gears" x="4" y="0" width="22" height="20"/><text x="15" y="29.500" text-anchor="middle" font-family="Open Sans,sans-serif" font-weight="700" font-size="11.500" fill="#fff">M</text></svg></div>
  <div class="app run"><svg viewBox="0 0 30 30"><path d="M4 3h22v24H4z" fill="url(#gPad)"/><path d="M4 26h22v1.500H4z" fill="#e9f3f7"/><path d="M4 27.500h22V30H4z" fill="#b1521a"/><path d="M8 9.500h14M8 14.500h14M8 19.500h14" stroke="#0c5d80" stroke-width="1.800"/><path d="M7 1v3M11 1v3M15 1v3M19 1v3M23 1v3" stroke="#1b7ea6" stroke-width="1.700"/></svg></div>
  <div class="tray">
    <svg class="tchev" viewBox="0 0 14 10"><path d="M1 8.500l6-6 6 6" fill="none" stroke="#fff" stroke-width="1.800"/></svg>
    <svg class="tcloud" viewBox="0 0 20 14"><path d="M4 8a4 4 0 0 1 0-3 5 5 0 0 1 9-2 4 4 0 0 1 3 5z" fill="#9a9a9a"/><path d="M3 13.500A3.500 3.500 0 0 1 4 7a6 6 0 0 1 5 0l4 2a4 4 0 0 1 6 2q0 2.500-3 2.500z" fill="#f2f2f2"/></svg>
    <div class="lang">ENG<br>IN</div>
    <svg class="tset" viewBox="0 0 80 20"><g fill="none" stroke="#fff" stroke-width="1.500"><path d="M1 8a12 12 0 0 1 17 0M3.500 11a8.500 8.500 0 0 1 12 0M6 13.800a5 5 0 0 1 7 0"/><path d="M30 7.500h3l5-4v13l-5-4h-3zM40 7.500q1.500 2.500 0 5"/><path d="M43 5.500q3 4.500 0 9M46 3.500q4.500 6.500 0 13" stroke="#666"/><path d="M66 5h7q2 0 2 2v7q0 2-2 2H63q-2 0-2-2v-3M77.500 8.500v4"/></g><circle cx="9.500" cy="16.500" r="1.700" fill="#fff"/><path d="M64 1l-5 8h3l-1 5 5-8h-3z" fill="#fff"/></svg>
    <div class="clock">13:22<br>04-10-2024</div>
    <svg class="bell" viewBox="0 0 18 20"><path d="M2 15q2-2 2-4V8a5 5 0 0 1 10 0v3q0 2 2 4zM7 17.500q2 1.500 4 0" fill="none" stroke="#fff" stroke-width="1.500"/></svg>
  </div>
</div>
<script src="mesh.js"></script>
</body>
</html>
```
FILE: styles.css
```css
*{box-sizing:border-box}
html,body{margin:0;height:100%}
body{width:1918px;height:1078px;overflow:hidden;display:flex;flex-direction:column;background:#eeeef2;font:14.500px/18px "Open Sans","Noto Sans",sans-serif;color:#1e1e1e;white-space:nowrap;letter-spacing:-.2px}
i,em{font-style:normal}
svg{display:block;flex:none;overflow:visible}
.defs{width:0;height:0;position:absolute}
.titlebar{height:32px;flex:none;display:flex;align-items:flex-start}
.app-ic{width:21px;height:21px;margin:3px 0 0 9px}
.tsep{width:1px;height:24px;margin:3px 7px 0 9px;background:#c8c8d0}
.save-ic{width:18px;height:18px;margin-top:5px}
.qat{width:10px;margin:9px 0 0 7px;border-top:2px solid #555;height:8px}
.qat::after{content:"";display:block;margin-top:1px;border:5px solid transparent;border-top-color:#555;border-bottom:0}
.context{width:69px;height:32px;margin-left:72px;border-top:5px solid #2b579a;background:#d5e0f3;color:#3b6cc0;text-align:center;padding-top:5px}
.wintitle{margin-left:6px;padding-top:10px;color:#555;flex:1;letter-spacing:-.38px}
.winbtns{width:100px;height:20px;margin:9px 12px 0 0}
.tabs{height:31px;flex:none;display:flex;border-bottom:1px solid #c6c6cb}
.tab{padding:8px 0 0;height:30px;text-align:center;letter-spacing:-.38px}
.file{width:70px;height:29px;background:#0072c6;color:#fff;padding:7px 0 0;margin-right:10px}
.home{width:71px;background:#fafafa;border:1px solid #c6c6cb;border-bottom:0;height:31px;padding:7px 0 0}
.w1{width:72px}.w2{width:83.500px}.w3{width:94.500px}.w4{width:112px}.w5{width:178px}
.quick{width:200px;height:27px;margin:2px 0 0 auto;background:#fff;border:1.500px solid #cfcfdc;color:#9b9b9b;padding:4px 0 0 4px;letter-spacing:-.3px}
.quick-ic{width:80px;height:20px;margin:5px 2px 0 4px}
.ribbon{height:108px;flex:none;background:#fafafa;border-bottom:1px solid #c6c6cb;display:flex;letter-spacing:-.45px}
.group{height:92px;margin-top:7px;border-right:1px solid #ccc;display:flex;flex-direction:column}
.items{display:flex;height:80px;margin-top:-2px}
.glabel{text-align:center;color:#777;line-height:14px;margin-top:-1px;letter-spacing:-.3px}
.col{display:flex;flex-direction:column}
.it{height:26.300px;display:flex;align-items:center}
.it svg{width:18px;height:18px;margin-right:2.500px}
.off{color:#9a9a9a}
.dd{display:inline-block;border:4px solid transparent;border-top:5px solid #777;border-bottom:0;margin-left:3px}
.it .dd{margin-top:-4px}
.big{display:flex;flex-direction:column;align-items:center;text-align:center;height:82px}
.big svg{margin-top:3px}
.big b{font-weight:400;line-height:14px;margin-top:auto;height:33px}
.big .dd{margin:-10px 0 5px}
.g-outline{width:220px}.g-outline .big{width:60px;margin-left:13px}.g-outline .col:nth-child(2){margin-left:10px;width:63px}
.g-mesh{width:79px}.g-mesh .big{width:79px}
.g-insert{width:280px}.g-insert .col:first-child{margin-left:12px;width:150px}
.g-tools{width:643px}.g-tools .big:first-child{margin-left:8px;width:50px}
.g-tools .big:nth-child(2){width:80px;margin-left:-1px}.g-tools .big:nth-child(3){width:70px}
.g-tools .col:nth-child(4){width:124px;margin-left:6px}.g-tools .col:nth-child(5){width:169px}
.g-layout{width:196px}.g-layout .big{width:50px;margin-left:9px}.g-layout .col{margin-left:6px}
.work{flex:1;min-height:0;display:flex}
.left{width:354px;flex:none;display:flex;flex-direction:column;margin-right:4px}
.phead{height:25px;flex:none;display:flex;align-items:center;padding:0 10px 0 6px;color:#444}
.phead span{letter-spacing:-.05px}
.dots{flex:1;height:8px;margin:0 4px 0 6px;background:radial-gradient(circle,#aaa 34%,transparent 40%) 0 0/4px 4px,radial-gradient(circle,#aaa 34%,transparent 40%) 2px 2px/4px 4px;opacity:.65}
.tri{border:5px solid transparent;border-top:5px solid currentColor;border-bottom:0;flex:none}
.tri.sm{border-width:4px 4px 0;color:#222}
.p1{width:11px;height:15px;margin-left:9px}.p2{width:14px;height:13px;margin-left:9px}.p3{width:12px;height:12px;margin-left:8px}
.phead svg,.phead .tri{color:#222}
.blue{background:#007acc}
.blue,.blue svg,.blue .tri{color:#fff}
.blue .dots{opacity:.35}
.filter{height:34px;flex:none;display:flex;align-items:center;padding-left:12px}
.grip{width:7px;height:22px;background:radial-gradient(circle,#bbb 34%,transparent 40%) 0 0/4px 4px,radial-gradient(circle,#bbb 34%,transparent 40%) 2px 2px/4px 4px}
.filter .combo{width:125px;height:28px;margin-left:9px;background:#fff;border:1px solid #cfcfdc;display:flex;align-items:center;padding:0 4px 0 3px;letter-spacing:-.1px}
.combo .dd{margin-left:auto;border-width:5px 5px 0}
.srch{width:112px;height:28px;background:#fff;border:1px solid #cfcfdc;color:#aaa;padding:4px;letter-spacing:-.1px}
.chev{width:16px;height:10px;margin:0 10px 0 6px}
.filter .tri{margin-top:9px;margin-left:-2px}
.treebox{flex:none;height:437px;background:#fff;font:13.600px/20px "DejaVu Sans Condensed","DejaVu Sans",sans-serif;letter-spacing:-.2px}
.row{height:20px;display:flex;align-items:center;position:relative}
.row b{letter-spacing:.25px}
.row .wide{letter-spacing:-.08px}
.l0{padding-left:12px}.l1{padding-left:10px}.l2{padding-left:44px}.l3{padding-left:83px}.noex{padding-left:49px}
.ti{width:17px;height:17px;margin-right:7px}
.l1 .ti{margin-right:8px}
.ex,.dr s{width:11px;height:11px;border:1px solid #888;font:700 11px/9px "Liberation Sans",sans-serif;text-align:center;background:#fff;flex:none;letter-spacing:0;text-decoration:none}
.dash{border-top:1px dotted #999;width:12px;flex:none}
.l1 .dash{margin-right:12px}.noex .dash{width:18px}.l3 .dash{width:18px}
.l3::before{content:"";position:absolute;left:83px;top:-6px;height:16px;border-left:1px dotted #999}
.ck{width:11px;height:11px;margin:8px 1px 0 0}
.l3 .ti{margin-right:6.500px}
.hl{background:#eee;padding:0 2px;margin-left:-2px}
.details{flex:1;min-height:0;display:flex;background:#fff;overflow:hidden}
.table{width:332px;padding-top:1px}
.dr{height:22.480px;display:grid;grid-template-columns:17px 194px 121px;letter-spacing:-.42px}
.dr>*{border-right:1px solid #a0a0a0;border-bottom:1px solid #a0a0a0;height:22.480px;padding:2px 0 0 4px;overflow:hidden;display:flex;line-height:18px}
.dr>i{border-bottom:0;padding:6px 0 0 2px}
.dr b{grid-column:2/4;letter-spacing:-.55px;font-size:14px}
.dr u{width:14px;height:14px;border:1.500px solid #c4c4c4;margin:2px 6px 0 0}
.sel span{background:#0078d7;color:#fff}
.sel em{padding-right:0}
.sel q{quotes:none;width:20px;height:20px;margin:-1px 0 0 auto;background:#eee;border:1px solid #ddd;border-right:2px solid #777;border-bottom:2px solid #777;display:flex;align-items:center;justify-content:center}
.sel q::before{content:"";border:4px solid transparent;border-top:5px solid #000;border-bottom:0}
.sel q::after{content:none}
.dr.sel em{letter-spacing:-.2px}
.ro em{background:#e7e6e3;letter-spacing:0}
.dscroll{flex:1;background:#f0f0f0;padding:103px 0 0 10px}
.dscroll::before{content:"";display:block;width:2.500px;height:154px;background:#858585}
.right{flex:1;display:flex;flex-direction:column}
.toolbar{height:33px;flex:none;display:flex;align-items:center;padding-left:13px}
.toolbar .grip{margin-right:8.300px}
.c{width:27.450px;height:27px;display:flex;align-items:center;justify-content:center;flex:none}
.c svg,.t svg{width:18px;height:18px}
.on{border:2px solid #4a9fee;background:#f5f9fe}
.arrow{width:14px}.arrow .dd{margin:0}
.sep{width:1px;height:25px;margin:0 3.200px;background:#cbcbd2;flex:none}
.t{display:flex;align-items:center;flex:none}
.t svg{margin-right:5px}
.t-sel{width:49px;padding-left:6px}.t-mode{width:85.500px;padding-left:5px}
.t-clip{width:116px;padding-left:6px}.t-empty{width:64px;letter-spacing:-.1px;padding-left:1px}
.t-ext{width:96px;padding-left:7px}.t-by{width:106px;padding-left:2px}.t-conv{width:95px;padding-left:1px}
.t-by svg,.t-ext svg,.t-conv svg{margin-right:4px}
.t-mode .dd,.t-ext .dd,.t-clip .dd{margin-left:2px}
.toolbar .tri{margin:13px 0 0 4px}
.view{height:560px;flex:none;background:linear-gradient(#698add,#b0c2ee 47%,#f5f7fe 85%,#fff)}
.rule{font:15px "Open Sans",sans-serif;text-anchor:middle;fill:#111}
.lg1{font:700 48px Lato,"Open Sans",sans-serif}.lg2{font:700 23px Inter,sans-serif}.lg3{font:800 23px Inter,sans-serif}
.ax{font:14px "Liberation Sans",sans-serif;text-anchor:middle}
.metrics{flex:1;min-height:0;border-top:1px solid #d8d8e0;margin-top:4px;display:flex;flex-direction:column}
.mm{padding:0 8px 1px 7px}.mm .p1{margin-left:10px}.mm .p3{margin-left:10px}.mm span{letter-spacing:-.15px}
.mbody{flex:1;min-height:0;background:#fff;display:flex;overflow:hidden}
.chartcol{width:1541px}
.controls{display:block;width:91px;height:29px;margin:19px 0 0 14px;padding:0;font:16px "Liberation Sans",sans-serif;background:#f0f0f0;border:1px solid #e6e6e6;border-right:2px solid #777;border-bottom:2px solid #777;color:#111}
.ct{font:13.500px "Open Sans",sans-serif;fill:#222;letter-spacing:0}
.bold{font-weight:700;fill:#111}
.cb{font:700 13.500px "Open Sans",sans-serif;fill:#111}
.vscroll{width:19px;background:#f0f0f0;padding-top:21px}
.vscroll svg{width:19px;height:12px}
.vscroll i{display:block;height:101px;background:#cdcdcd;margin:9px 0 24px}
.status{height:25px;flex:none;background:#007acc;color:#e9f3fb;display:flex;align-items:center;justify-content:flex-end;margin-bottom:1px;padding-top:2px}
.status span{display:flex;align-items:center}
.status svg{width:19px;height:23px;margin-right:3px}
.s1{width:120px}.s2{width:111px}.s3{width:193px}.s3 i{border:5px solid transparent;border-bottom:6px solid #fff;border-top:0;margin-right:8px}
.s4{width:68px}.s5{width:48px}.s6{width:54px}
.taskbar{height:57px;flex:none;background:#202020;color:#fff;display:flex;align-items:center}
.weather{width:585px;display:flex;align-items:center;padding-left:24px}
.weather p{margin:1px 0 0 8px;line-height:20px;letter-spacing:-.2px}
.weather span{color:#ccc}
.pill{width:275px;height:40px;margin:0 1px 0 16px;border-radius:20px;background:#454247;border:1px solid #56535a;display:flex;align-items:center;padding-left:14px;font-size:16px;color:#ddd;letter-spacing:-.1px}
.pill span{margin:2px auto 0 11px}
.pill svg:last-child{margin-right:3px}
.app{width:49px;height:49px;margin:0 3px;display:flex;align-items:center;justify-content:center;position:relative;border-radius:5px}
.pill+.app{margin-left:4px}
.app svg{width:30px;height:30px}
.run::after{content:"";position:absolute;bottom:1px;width:8px;height:3.500px;border-radius:2px;background:#9b9b9b}
.act{background:#303030;border:1px solid #3c3c3c}
.act::after{width:20px;background:#d8d8d8;bottom:0}
.tray{margin-left:auto;display:flex;align-items:center;line-height:20px;letter-spacing:-.2px}
.tchev{width:14px;height:10px;margin-right:23px}
.tcloud{width:20px;height:14px;margin-right:18px}
.lang{width:40px;text-align:center}
.tset{width:80px;height:20px;margin-left:17px}
.clock{width:90px;text-align:right;margin-left:7px;letter-spacing:.05px}
.bell{width:18px;height:21px;margin:0 24px 0 11px}
```
FILE: mesh.js
```javascript
// Builds the surface mesh: a nozzle with wall-following cells and a uniform far-field block.
(function () {
  const NS = 'http://www.w3.org/2000/svg';
  const wall = [[602,573],[612,579.5],[622,588],[632,597],[638,601.5],[643,603],[650,601.5],[660,596],[672,591],[683,587],[704,582.5],[725,578.7],[748,575.7],[771,573],[813,568.7],[863,565],[924,562],[980,560.8],[1038,560]];
  const bottom = 643, step = 3.96, end = 950;

  function wallY(x) {
    let i = 0;
    while (i < wall.length - 2 && wall[i + 1][0] < x) i++;
    const [x0, y0] = wall[i], [x1, y1] = wall[i + 1];
    const p = wall[Math.max(0, i - 1)], n = wall[Math.min(wall.length - 1, i + 2)];
    const m0 = (y1 - p[1]) / (x1 - p[0] || 1), m1 = (n[1] - y0) / (n[0] - x0 || 1);
    const h = x1 - x0, t = (x - x0) / h, t2 = t * t, t3 = t2 * t;
    return (2*t3 - 3*t2 + 1)*y0 + (t3 - 2*t2 + t)*h*m0 + (3*t2 - 2*t3)*y1 + (t3 - t2)*h*m1;
  }
  function add(tag, attrs, parent) {
    const e = document.createElementNS(NS, tag);
    for (const k in attrs) e.setAttribute(k, attrs[k]);
    parent.appendChild(e);
    return e;
  }
  const mesh = document.getElementById('mesh');
  let crest = '';
  for (let x = 602; x <= 1038; x += 2) crest += 'L' + x + ' ' + wallY(x).toFixed(2);
  const nozzle = 'M602 ' + bottom + crest + 'V' + bottom + 'Z';
  add('path', { d: nozzle + 'M1038 324H1677V643H1038Z', fill: 'url(#cells)' }, mesh);

  // Curved layer: from the wall down to the level where the grid becomes regular.
  const base = x => Math.min(624, 607 + (x < 720 ? (720 - x) * 0.16 : 0));
  let band = 'M602 ' + wallY(602), lines = '';
  for (let x = 602; x <= end; x += 2) band += 'L' + x + ' ' + wallY(x).toFixed(2);
  for (let x = end; x >= 602; x -= 2) band += 'L' + x + ' ' + base(x).toFixed(2);
  band += 'Z';
  const clip = add('clipPath', { id: 'band' }, mesh);
  add('path', { d: band }, clip);
  for (let k = 1; k < 14; k++) {
    for (let x = 602; x <= end; x += 3) lines += (x === 602 ? 'M' : 'L') + x + ' ' + (wallY(x) + k * step).toFixed(2);
  }
  for (let x = 598; x <= end + 6;) {
    const cx = Math.max(602, x), s = (wallY(cx + 3) - wallY(cx)) / 3;
    const len = 62;
    lines += 'M' + x + ' ' + wallY(cx).toFixed(2) + 'l' + (-s * .6 * len).toFixed(2) + ' ' + len.toFixed(2);
    x += step / Math.sqrt(1 + s * s);
  }
  const g = add('g', { 'clip-path': 'url(#band)' }, mesh);
  add('path', { d: band, fill: '#727370' }, g);
  add('path', { d: lines, fill: 'none', stroke: '#000', 'stroke-width': 1.25 }, g);
  add('path', { d: nozzle.replace(/V643Z$/, ''), fill: 'none', stroke: '#111', 'stroke-width': 1 }, mesh);
  add('path', { d: 'M1038.5 560V324.500H1677V643H602', fill: 'none', stroke: '#111', 'stroke-width': 1 }, mesh);
})();
```
